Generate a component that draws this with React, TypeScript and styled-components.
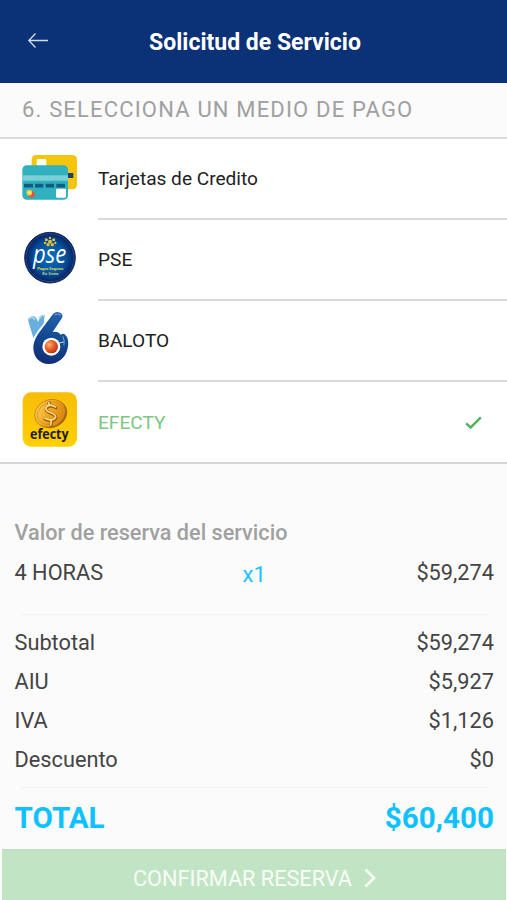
import React from "react";
import styled, { createGlobalStyle } from "styled-components";

const GlobalStyle = createGlobalStyle`
  * { box-sizing: border-box; }
  body {
    margin: 0;
    background: #fbfbfb;
    font-family: Roboto, sans-serif;
  }
  button { font-family: inherit; border: 0; padding: 0; }
`;

const Screen = styled.main`
  display: flex;
  flex-direction: column;
  width: 507px;
  height: 900px;
  overflow: hidden;
  background: #fbfbfb;
`;

const Header = styled.header`
  display: grid;
  grid-template-columns: 76px 1fr 73px;
  align-items: center;
  height: 83px;
  background: #0b3176;
  color: #fff;
`;

const BackButton = styled.button`
  display: flex;
  justify-content: center;
  height: 40px;
  align-items: center;
  padding-bottom: 1px;
  background: none;
  color: #d5def0;
`;

const Title = styled.h1`
  margin: 0;
  padding-top: 2px;
  text-align: center;
  font-size: 23px;
  line-height: 28px;
  font-weight: 700;
`;

const SectionHeading = styled.h2`
  display: flex;
  align-items: center;
  height: 56px;
  margin: 0;
  padding: 0 0 1px 22px;
  border-bottom: 2px solid #dadada;
  color: #a0a0a0;
  font-size: 22px;
  font-weight: 400;
  letter-spacing: 1.17px;
  white-space: nowrap;
`;

const MethodList = styled.ul`
  margin: 0;
  padding: 0;
  list-style: none;
  background: #fff;
  border-bottom: 2px solid #d6d6d6;
`;

const MethodRow = styled.li<{ $last?: boolean }>`
  display: flex;
  height: ${(p) => (p.$last ? "80px" : "81px")};
  padding-left: 10px;
`;

const MethodIcon = styled.svg`
  flex: none;
  width: 80px;
  height: 79px;
  margin-right: 8px;
`;

const MethodBody = styled.div<{ $selected?: boolean }>`
  display: flex;
  flex: 1;
  align-items: center;
  justify-content: space-between;
  padding-right: 25px;
  padding-top: ${(p) => (p.$selected ? "2px" : "0")};
  border-bottom: ${(p) => (p.$selected ? "0" : "2px solid #d9d9d9")};
  color: ${(p) => (p.$selected ? "#7cc682" : "#222")};
  font-size: 19.1px;
  line-height: 24px;
`;

const Summary = styled.section`
  display: flex;
  flex: 1;
  flex-direction: column;
  padding: 49px 13px 0 14.5px;
  color: #444;
  font-size: 21.75px;
`;

const SummaryTitle = styled.h3`
  height: 39.5px;
  margin: 0;
  color: #a0a0a0;
  font-size: 21.65px;
  line-height: 39.5px;
  font-weight: 500;
`;

const ServiceLine = styled.div`
  display: grid;
  grid-template-columns: 1fr auto 1fr;
  height: 61px;
  line-height: 39.5px;
`;

const Quantity = styled.span`
  padding-top: 2px;
  color: #1cc3fb;
  font-size: 22.2px;
`;

const Price = styled.span`
  text-align: right;
`;

const Divider = styled.hr`
  width: 469px;
  height: 1px;
  margin: 0 0 0 5.5px;
  border: 0;
  background: #f2f2f2;
`;

const Breakdown = styled.div`
  padding: 8px 0 7px;
`;

const AmountLine = styled.div`
  display: flex;
  justify-content: space-between;
  height: 39.33px;
  line-height: 39.33px;
`;

const TotalLine = styled(AmountLine)`
  height: 60px;
  line-height: 60px;
  color: #0fc2ff;
  font-size: 29.6px;
  font-weight: 700;
`;

const ConfirmButton = styled.button`
  display: flex;
  align-items: center;
  justify-content: center;
  gap: 12px;
  height: 51px;
  margin: 0 1px 0 2px;
  padding: 7px 0 0 1px;
  background: linear-gradient(#bedfc1, #c1e5c4 4px);
  color: #f8fdf8;
  font-size: 21.7px;
  font-weight: 400;
`;

const CardsIcon = () => (
  <MethodIcon viewBox="0 -3 240 237">
    <rect x="65" y="45" width="136" height="103" rx="13" fill="#f3c60d" />
    <rect x="80" y="57" width="29" height="27" rx="4" fill="#fffdf0" />
    <rect x="160" y="99" width="30" height="15" fill="#243e63" />
    <rect x="37" y="76" width="137" height="103" rx="13" fill="#31b1bd" />
    <rect x="37" y="106" width="137" height="16" fill="#7bd0d7" />
    <path d="M42 137h27M75 137h25M107 137h25M139 137h26" stroke="#125b82" strokeWidth="11" />
    <rect x="138" y="146" width="30" height="27" rx="4" fill="#fff" />
    <circle cx="64" cy="163" r="10" fill="#e4533b" />
    <circle cx="58" cy="158" r="8.5" fill="#f3cb3d" />
    <circle cx="58" cy="157" r="3.5" fill="#fff3b5" />
  </MethodIcon>
);

const PseIcon = () => (
  <MethodIcon viewBox="0 0 240 237">
    <defs>
      <radialGradient id="pseBlue">
        <stop offset="0" stopColor="#0870bd" />
        <stop offset="0.65" stopColor="#064d98" />
        <stop offset="1" stopColor="#071b58" />
      </radialGradient>
    </defs>
    <circle cx="120" cy="113" r="76" fill="url(#pseBlue)" stroke="#17275c" strokeWidth="3" />
    <circle cx="120" cy="113" r="72" fill="none" stroke="#2e5c98" strokeWidth="2" />
    <g fill="#dfc13d">
      <circle cx="120" cy="65" r="6" />
      <circle cx="109" cy="59" r="4.5" />
      <circle cx="131" cy="59" r="4.5" />
      <circle cx="114" cy="74" r="5" />
      <circle cx="127" cy="74" r="5" />
      <circle cx="120" cy="54" r="3.5" />
      <circle cx="105" cy="69" r="3.5" />
      <circle cx="136" cy="69" r="3.5" />
    </g>
    <text transform="translate(69 128) scale(0.86 1)" fill="#fff" fontFamily="Open Sans, sans-serif" fontSize="77" fontStyle="italic" fontWeight="500">pse</text>
    <g fill="#c8d36a" fontFamily="Roboto, sans-serif" fontSize="12.5" fontWeight="700">
      <text x="82" y="150" textLength="78">Pagos Seguros</text>
      <text x="97" y="166" textLength="48">En línea</text>
    </g>
  </MethodIcon>
);

const BalotoIcon = () => (
  <MethodIcon viewBox="0 -3 240 237">
    <defs>
      <linearGradient id="balotoBlue" x1="0.6" y1="0" x2="0.4" y2="1">
        <stop offset="0" stopColor="#2461ab" />
        <stop offset="0.5" stopColor="#124a92" />
        <stop offset="1" stopColor="#122e76" />
      </linearGradient>
      <radialGradient id="balotoBall" cx="0.35" cy="0.35" r="0.7">
        <stop offset="0" stopColor="#ffb27d" />
        <stop offset="0.45" stopColor="#ee672c" />
        <stop offset="1" stopColor="#bd3218" />
      </radialGradient>
    </defs>
    <path d="M63 44Q52 48 55 58L70 108Q84 82 101 65L104 38Q92 38 84 60Q78 38 63 44Z" fill="#68aede" />
    <path d="M58 50Q66 41 74 52M88 49Q96 37 103 42" fill="none" stroke="#a9d5ee" strokeWidth="5" strokeLinecap="round" />
    <path d="M129 36Q141 25 155 35Q160 42 154 51L128 90Q143 86 153 99Q157 93 164 97Q179 109 173 139C167 169 143 186 117 186C88 186 68 164 70 132Q73 108 93 84Z" fill="url(#balotoBlue)" />
    <path d="M135 38Q145 32 152 39M159 104Q165 116 162 129" fill="none" stroke="#7aa8d5" strokeWidth="3" strokeLinecap="round" />
    <path d="M148 123L160 120" stroke="#cfdff0" strokeWidth="3" strokeLinecap="round" />
    <circle cx="124" cy="134" r="27" fill="#fff" />
    <circle cx="124" cy="134" r="20" fill="url(#balotoBall)" />
  </MethodIcon>
);

const EfectyIcon = () => (
  <MethodIcon viewBox="0 0 240 237">
    <defs>
      <linearGradient id="efectyYellow" x1="0" y1="0" x2="0" y2="1">
        <stop offset="0" stopColor="#f7bd09" />
        <stop offset="1" stopColor="#ffd000" />
      </linearGradient>
      <linearGradient id="efectyCoin" x1="0" y1="0" x2="1" y2="1">
        <stop offset="0" stopColor="#ffd765" />
        <stop offset="0.5" stopColor="#f0a51c" />
        <stop offset="1" stopColor="#cf7a0c" />
      </linearGradient>
    </defs>
    <rect x="38" y="31" width="163" height="163" rx="25" fill="url(#efectyYellow)" />
    <g transform="rotate(-28 122 95)">
      <ellipse cx="124" cy="98" rx="48" ry="40" fill="#a3600e" />
      <ellipse cx="121" cy="93" rx="48" ry="40" fill="url(#efectyCoin)" stroke="#b8730f" strokeWidth="2" />
      <ellipse cx="121" cy="93" rx="40" ry="32" fill="none" stroke="#d28b19" strokeWidth="2" />
    </g>
    <g fill="none" strokeLinecap="round">
      <path d="M138 77Q117 65 109 79C104 95 138 92 138 107Q131 122 105 111M117 62L119 73M125 115L123 130" stroke="#9c5d0c" strokeWidth="10" />
      <path d="M137 75Q116 63 108 77C103 93 137 90 137 105Q130 120 104 109M116 61L118 71M124 114L122 129" stroke="#ffe08a" strokeWidth="5" />
    </g>
    <text transform="translate(60 170) scale(0.86 1)" fill="#201b0c" fontFamily="Open Sans, sans-serif" fontSize="43" fontWeight="700" textLength="135" lengthAdjust="spacingAndGlyphs">efecty</text>
  </MethodIcon>
);

const methods = [
  { name: "Tarjetas de Credito", Icon: CardsIcon },
  { name: "PSE", Icon: PseIcon },
  { name: "BALOTO", Icon: BalotoIcon },
  { name: "EFECTY", Icon: EfectyIcon, selected: true },
];

const amounts = [
  ["Subtotal", "$59,274"],
  ["AIU", "$5,927"],
  ["IVA", "$1,126"],
  ["Descuento", "$0"],
];

export default function App() {
  return (
    <>
      <GlobalStyle />
      <Screen>
        <Header>
          <BackButton aria-label="Volver">
            <svg width="22" height="18" viewBox="0 0 22 18" fill="none" stroke="currentColor" strokeWidth="1.3">
              <path d="M21 8.5H2M8.5 1.5L1.8 8.5L8.5 15.5" />
            </svg>
          </BackButton>
          <Title>Solicitud de Servicio</Title>
        </Header>
        <SectionHeading>6. SELECCIONA UN MEDIO DE PAGO</SectionHeading>
        <MethodList>
          {methods.map(({ name, Icon, selected }, index) => (
            <MethodRow key={name} $last={index === methods.length - 1}>
              <Icon />
              <MethodBody $selected={selected}>
                {name}
                {selected && (
                  <svg width="17" height="14" viewBox="0 0 17 14" fill="none" stroke="#4db35a" strokeWidth="2.4">
                    <path d="M1.2 7.4L5.6 11.6L15.8 1.4" />
                  </svg>
                )}
              </MethodBody>
            </MethodRow>
          ))}
        </MethodList>
        <Summary>
          <SummaryTitle>Valor de reserva del servicio</SummaryTitle>
          <ServiceLine>
            <span>4 HORAS</span>
            <Quantity>x1</Quantity>
            <Price>$59,274</Price>
          </ServiceLine>
          <Divider />
          <Breakdown>
            {amounts.map(([label, value]) => (
              <AmountLine key={label}>
                <span>{label}</span>
                <span>{value}</span>
              </AmountLine>
            ))}
          </Breakdown>
          <Divider />
          <TotalLine>
            <span>TOTAL</span>
            <span>$60,400</span>
          </TotalLine>
        </Summary>
        <ConfirmButton>
          CONFIRMAR RESERVA
          <svg width="12" height="20" viewBox="0 0 12 20" fill="none" stroke="currentColor" strokeWidth="2.6">
            <path d="M1.5 1.5L10 10L1.5 18.5" />
          </svg>
        </ConfirmButton>
      </Screen>
    </>
  );
}
